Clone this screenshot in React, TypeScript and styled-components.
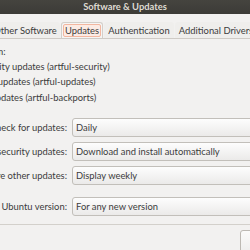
import React from 'react'
import styled, { createGlobalStyle } from 'styled-components'

const GlobalStyle = createGlobalStyle`
    html, body {
        margin: 0;
        padding: 0;
        background: #f2f1f0;
        overflow: hidden;
    }
    body {
        font-family: Lato, "Open Sans", sans-serif;
        font-size: 9.4px;
        color: #3c3c3c;
    }
`

const Window = styled.div`
    width: 250px;
    height: 250px;
    display: flex;
    flex-direction: column;
    overflow: hidden;
    background: #f2f1f0;
    & > * {
        flex-shrink: 0;
    }
`

const TitleBar = styled.div`
    height: 14px;
    display: flex;
    align-items: center;
    justify-content: center;
    background: linear-gradient(#45443f, #3c3b37);
    color: #dfdbd2;
    font-weight: bold;
    font-size: 9.4px;
    line-height: 14px;
`

const TabStrip = styled.div`
    display: flex;
    gap: 1px;
    margin-top: 8px;
    margin-left: -10px;
    height: 16px;
    border-bottom: 1px solid #cfcbc6;
`

const Tab = styled.div<{ $width: number; $active?: boolean }>`
    width: ${p => p.$width}px;
    flex-shrink: 0;
    display: flex;
    align-items: center;
    justify-content: center;
    white-space: nowrap;
    box-sizing: border-box;
    border: 1px solid ${p => (p.$active ? '#d3cfca' : 'transparent')};
    border-bottom: none;
    border-radius: 3px 3px 0 0;
    background: ${p => (p.$active ? '#f6f5f4' : '#efeeec')};
`

const Focus = styled.span`
    padding: 0 1px;
    border: 1px solid #f3b7a0;
    border-radius: 2px;
    background: #fcebe4;
    line-height: 11px;
`

const Sources = styled.div`
    margin-left: -84px;
    padding-top: 4.5px;
    display: flex;
    flex-direction: column;
`

const Heading = styled.div`
    height: 15px;
    line-height: 15px;
    margin-left: 6px;
    white-space: nowrap;
`

const CheckRow = styled.div`
    height: 15.5px;
    display: flex;
    align-items: center;
    gap: 7px;
    white-space: nowrap;
`

const CheckBox = styled.span`
    width: 11px;
    height: 11px;
    box-sizing: border-box;
    border: 1px solid #a8a49e;
    border-radius: 2px;
    background: #fff;
    flex-shrink: 0;
`

const Form = styled.div`
    margin-top: 13px;
    margin-left: -150px;
    display: grid;
    grid-template-columns: 217px 200px;
    column-gap: 5px;
    row-gap: 5px;
`

const Label = styled.div<{ $gap?: number }>`
    margin-top: ${p => p.$gap || 0}px;
    height: 19px;
    display: flex;
    align-items: center;
    justify-content: flex-end;
    white-space: nowrap;
`

const Combo = styled.div<{ $gap?: number }>`
    margin-top: ${p => p.$gap || 0}px;
    height: 19px;
    box-sizing: border-box;
    display: flex;
    align-items: center;
    padding-left: 3px;
    border: 1px solid #c2bfba;
    border-radius: 3px;
    background: linear-gradient(#fdfdfd, #ebeae9);
    white-space: nowrap;
`

const Separator = styled.div`
    margin-top: 8px;
    height: 1px;
    background: #d3d0cb;
`

const ButtonRow = styled.div`
    display: flex;
    margin-top: 5px;
    padding-left: 240px;
`

const Button = styled.div`
    width: 50px;
    height: 24px;
    flex-shrink: 0;
    box-sizing: border-box;
    border: 1px solid #bdb9b3;
    border-radius: 3px;
    background: linear-gradient(#fbfbfa, #eeedec);
`

const rows = [
    { label: 'Automatically check for updates:', value: 'Daily' },
    { label: 'When there are security updates:', value: 'Download and install automatically' },
    { label: 'When there are other updates:', value: 'Display weekly' },
    { label: 'Notify me of a new Ubuntu version:', value: 'For any new version', gap: 7 },
]

export default function App() {
    return (
        <Window>
            <GlobalStyle />
            <TitleBar>Software &amp; Updates</TitleBar>
            <TabStrip>
                <Tab $width={70}>Other Software</Tab>
                <Tab $width={42} $active><Focus>Updates</Focus></Tab>
                <Tab $width={70}>Authentication</Tab>
                <Tab $width={82}>Additional Drivers</Tab>
            </TabStrip>
            <Sources>
                <Heading>Install updates from:</Heading>
                <CheckRow><CheckBox />Important security updates (artful-security)</CheckRow>
                <CheckRow><CheckBox />Recommended updates (artful-updates)</CheckRow>
                <CheckRow><CheckBox />Unsupported updates (artful-backports)</CheckRow>
            </Sources>
            <Form>
                {rows.map(r => (
                    <React.Fragment key={r.label}>
                        <Label $gap={r.gap}>{r.label}</Label>
                        <Combo $gap={r.gap}>{r.value}</Combo>
                    </React.Fragment>
                ))}
            </Form>
            <Separator />
            <ButtonRow>
                <Button />
            </ButtonRow>
        </Window>
    )
}
